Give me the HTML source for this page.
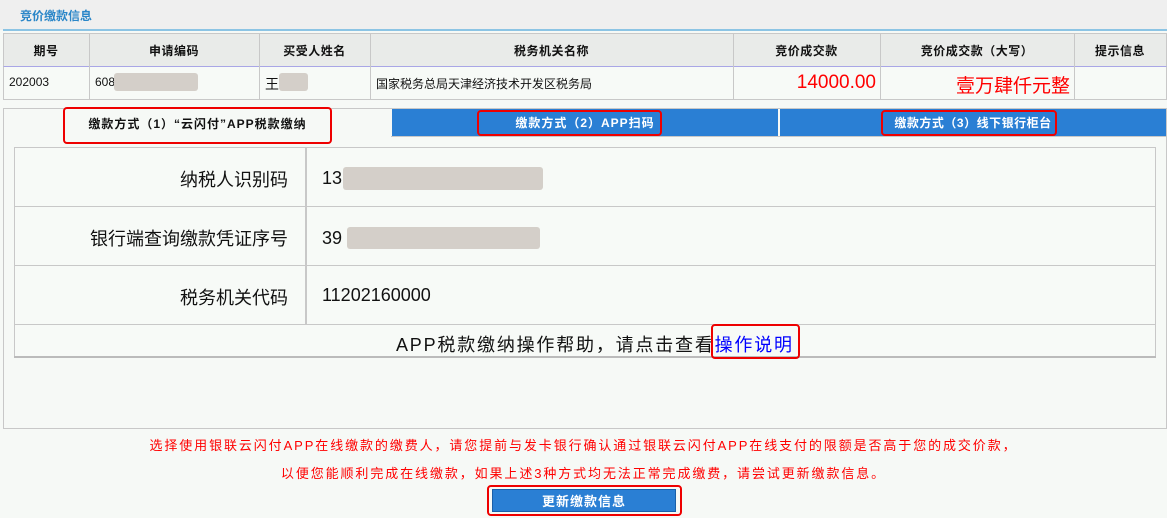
<!DOCTYPE html>
<html><head><meta charset="utf-8"><style>
*{margin:0;padding:0;box-sizing:border-box}
body{width:1167px;height:518px;background:#f6f9f6;position:relative;overflow:hidden;font-family:"Liberation Sans","Noto Sans CJK SC",sans-serif;color:#111}
.a{position:absolute}
.c{display:flex;align-items:center;justify-content:center}
.box{position:absolute;border:2px solid #e00;border-radius:4px}
.g{position:absolute;background:#d4cfc9;border-radius:3px}
</style></head><body>
<div class="a" style="left:0;top:0;width:1167px;height:30px;background:#efefef"></div>
<div class="a" style="left:20px;top:7px;font-size:12px;font-weight:bold;color:#2a86c8">竞价缴款信息</div>
<div class="a" style="left:3px;top:29px;width:1164px;height:2px;background:#8cc4e4"></div>

<div class="a" style="left:3px;top:33px;width:1164px;height:34px;background:#e9ebe9;border:1px solid #c8c8c8;border-bottom:1px solid #a9a6e6"></div>
<div class="a" style="left:3px;top:67px;width:1164px;height:33px;background:#f7faf7;border:1px solid #c8c8c8;border-top:none"></div>
<div class="a" style="left:89px;top:33px;width:1px;height:67px;background:#c8c8c8"></div>
<div class="a" style="left:259px;top:33px;width:1px;height:67px;background:#c8c8c8"></div>
<div class="a" style="left:370px;top:33px;width:1px;height:67px;background:#c8c8c8"></div>
<div class="a" style="left:733px;top:33px;width:1px;height:67px;background:#c8c8c8"></div>
<div class="a" style="left:880px;top:33px;width:1px;height:67px;background:#c8c8c8"></div>
<div class="a" style="left:1074px;top:33px;width:1px;height:67px;background:#c8c8c8"></div>
<div style="font-size:12px;font-weight:bold;letter-spacing:0.5px">
<div class="a c" style="left:3px;top:33px;width:86px;height:34px">期号</div>
<div class="a c" style="left:89px;top:33px;width:170px;height:34px">申请编码</div>
<div class="a c" style="left:259px;top:33px;width:111px;height:34px">买受人姓名</div>
<div class="a c" style="left:370px;top:33px;width:363px;height:34px">税务机关名称</div>
<div class="a c" style="left:733px;top:33px;width:147px;height:34px">竞价成交款</div>
<div class="a c" style="left:880px;top:33px;width:194px;height:34px">竞价成交款（大写）</div>
<div class="a c" style="left:1074px;top:33px;width:92px;height:34px">提示信息</div>
</div>
<div style="font-size:12px">
<div class="a" style="left:9px;top:75px">202003</div>
<div class="a" style="left:95px;top:75px">608</div>
<div class="g" style="left:114px;top:73px;width:84px;height:18px"></div>
<div class="a" style="left:265px;top:74px;font-size:14px">王</div>
<div class="g" style="left:279px;top:73px;width:29px;height:18px"></div>
<div class="a" style="left:376px;top:75px">国家税务总局天津经济技术开发区税务局</div>
<div class="a" style="left:733px;top:72px;width:143px;text-align:right;font-size:19px;color:#f00">14000.00</div>
<div class="a" style="left:880px;top:71px;width:190px;text-align:right;font-size:19px;color:#f00">壹万肆仟元整</div>
</div>

<div class="a" style="left:3px;top:108px;width:1164px;height:321px;border:1px solid #c8c8c8;background:#f6f9f6"></div>
<div class="a c" style="left:4px;top:109px;width:387px;height:28px;font-size:12px;font-weight:bold;background:#f6f9f6;letter-spacing:1px">缴款方式（1）“云闪付”APP税款缴纳</div>
<div class="a c" style="left:392px;top:109px;width:386px;height:27px;background:#2a7fd4;color:#fff;font-size:12px;font-weight:bold;letter-spacing:1px">缴款方式（2）APP扫码</div>
<div class="a c" style="left:780px;top:109px;width:386px;height:27px;background:#2a7fd4;color:#fff;font-size:12px;font-weight:bold;letter-spacing:0.5px">缴款方式（3）线下银行柜台</div>
<div class="a" style="left:391px;top:136px;width:775px;height:1px;background:#c8c8c8"></div>

<div class="a" style="left:14px;top:147px;width:1142px;height:210px;border:1px solid #c8c8c8;background:#f7faf7"></div>
<div class="a" style="left:305px;top:147px;width:2px;height:177px;background:#c8c8c8"></div>
<div class="a" style="left:14px;top:206px;width:1142px;height:1px;background:#c8c8c8"></div>
<div class="a" style="left:14px;top:265px;width:1142px;height:1px;background:#c8c8c8"></div>
<div class="a" style="left:14px;top:324px;width:1142px;height:1px;background:#c8c8c8"></div>
<div class="a" style="left:14px;top:356px;width:1142px;height:2px;background:#bbb"></div>
<div style="font-size:18px">
<div class="a" style="left:14px;top:166px;width:274px;text-align:right">纳税人识别码</div>
<div class="a" style="left:14px;top:225px;width:274px;text-align:right">银行端查询缴款凭证序号</div>
<div class="a" style="left:14px;top:284px;width:274px;text-align:right">税务机关代码</div>
<div class="a" style="left:322px;top:168px">13</div>
<div class="g" style="left:343px;top:167px;width:200px;height:23px"></div>
<div class="a" style="left:322px;top:228px">39</div>
<div class="g" style="left:347px;top:227px;width:193px;height:22px"></div>
<div class="a" style="left:322px;top:285px">11202160000</div>
<div class="a" style="left:396px;top:331px;letter-spacing:1.8px;white-space:nowrap">APP税款缴纳操作帮助，请点击查看<span style="color:#00f">操作说明</span></div>
</div>

<div class="a" style="left:0;top:435px;width:1167px;text-align:center;font-size:13px;color:#f00;letter-spacing:1.9px;white-space:nowrap">选择使用银联云闪付APP在线缴款的缴费人，请您提前与发卡银行确认通过银联云闪付APP在线支付的限额是否高于您的成交价款，</div>
<div class="a" style="left:0;top:463px;width:1167px;text-align:center;font-size:13px;color:#f00;letter-spacing:1.9px;white-space:nowrap">以便您能顺利完成在线缴款，如果上述3种方式均无法正常完成缴费，请尝试更新缴款信息。</div>
<div class="a c" style="left:492px;top:489px;width:184px;height:23px;background:#2a7fd4;border:1px solid #1a5fa8;color:#fff;font-size:13px;font-weight:bold;letter-spacing:1px">更新缴款信息</div>

<div class="box" style="left:63px;top:107px;width:269px;height:37px"></div>
<div class="box" style="left:477px;top:110px;width:185px;height:26px"></div>
<div class="box" style="left:881px;top:110px;width:176px;height:26px"></div>
<div class="box" style="left:711px;top:324px;width:89px;height:35px"></div>
<div class="box" style="left:487px;top:485px;width:195px;height:31px"></div>
</body></html>
